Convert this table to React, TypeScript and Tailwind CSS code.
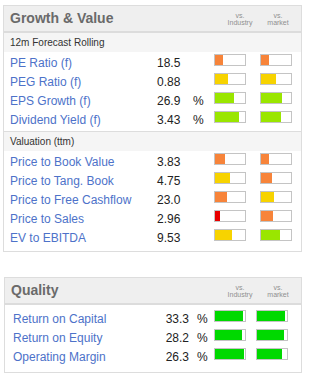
const growth = [
  { label: 'PE Ratio (f)', value: '18.5', pct: false, ind: [8, 'orange'], mkt: [8, 'orange'] },
  { label: 'PEG Ratio (f)', value: '0.88', pct: false, ind: [13, 'yellow'], mkt: [15, 'yellow'] },
  { label: 'EPS Growth (f)', value: '26.9', pct: true, ind: [19, 'lime'], mkt: [21, 'lime'] },
  { label: 'Dividend Yield (f)', value: '3.43', pct: true, ind: [24, 'lime'], mkt: [20, 'lime'] },
] as const

const valuation = [
  { label: 'Price to Book Value', value: '3.83', ind: [10, 'orange'], mkt: [8, 'orange'] },
  { label: 'Price to Tang. Book', value: '4.75', ind: [15, 'yellow'], mkt: [11, 'orange'] },
  { label: 'Price to Free Cashflow', value: '23.0', ind: [12, 'orange'], mkt: [13, 'yellow'] },
  { label: 'Price to Sales', value: '2.96', ind: [5, 'red'], mkt: [12, 'orange'] },
  { label: 'EV to EBITDA', value: '9.53', ind: [17, 'yellow'], mkt: [19, 'lime'] },
] as const

const quality = [
  { label: 'Return on Capital', value: '33.3', ind: 28, mkt: 28 },
  { label: 'Return on Equity', value: '28.2', ind: 27, mkt: 27 },
  { label: 'Operating Margin', value: '26.3', ind: 29, mkt: 25 },
]

const fills: Record<string, string> = {
  orange: 'bg-[#f7843a]',
  yellow: 'bg-[#f7d300]',
  lime: 'bg-[#9ae600]',
  red: 'bg-[#e80000]',
  green: 'bg-[#00d900]',
}

function Bar({ width, color }: { width: number; color: string }) {
  return (
    <div className="w-[32px] h-[12px] mb-[6px] border border-[#c4c4c4] bg-white flex shrink-0">
      <div className={`h-full ${fills[color]}`} style={{ width }} />
    </div>
  )
}

function Header({ title }: { title: string }) {
  return (
    <div className="h-[25px] bg-[#efefef] border-b-2 border-[#dcdcdc] box-content flex items-center justify-between pl-[6px] pr-[8px]">
      <span className="text-[14px] font-bold text-[#6a6a6a]">{title}</span>
      <div className="flex gap-[8px] text-[7px] leading-[7px] text-[#8f8f8f] text-center mt-[1px]">
        <div className="w-[30px]">vs.<br />Industry</div>
        <div className="w-[30px]">vs.<br />market</div>
      </div>
    </div>
  )
}

function SubHeader({ text }: { text: string }) {
  return (
    <div className="h-[19px] bg-[#f5f5f5] flex items-center pl-[6px] text-[10px] text-[#333]">{text}</div>
  )
}

export default function App() {
  return (
    <div className="w-[311px] h-[381px] bg-white pt-[5px] text-[12px] text-[#222]" style={{ fontFamily: '"Liberation Sans", Arial, sans-serif' }}>
      {/* Growth & Value */}
      <div className="ml-[3px] w-[299px] border border-[#dddddd]">
        <Header title="Growth & Value" />
        <SubHeader text="12m Forecast Rolling" />
        <div className="pt-[1px] pb-[2px]">
          {growth.map((r) => (
            <div key={r.label} className="h-[19px] flex items-center">
              <div className="w-[153px] pl-[6px] text-[#4d72c9]">{r.label}</div>
              <div className="w-[36px]">{r.value}</div>
              <div className="w-[21px]">{r.pct ? '%' : ''}</div>
              <Bar width={r.ind[0]} color={r.ind[1]} />
              <div className="w-[14px]" />
              <Bar width={r.mkt[0]} color={r.mkt[1]} />
            </div>
          ))}
        </div>
        <div className="border-t border-[#dddddd]">
          <SubHeader text="Valuation (ttm)" />
          <div className="pt-[1px] pb-[4px]">
            {valuation.map((r) => (
              <div key={r.label} className="h-[19px] flex items-center">
                <div className="w-[153px] pl-[6px] text-[#4d72c9]">{r.label}</div>
                <div className="w-[57px]">{r.value}</div>
                <Bar width={r.ind[0]} color={r.ind[1]} />
                <div className="w-[14px]" />
                <Bar width={r.mkt[0]} color={r.mkt[1]} />
              </div>
            ))}
          </div>
        </div>
      </div>

      {/* Quality */}
      <div className="ml-[4px] mt-[25px] w-[298px] border border-[#dddddd]">
        <Header title="Quality" />
        <div className="pt-[4px] pb-[6px]">
          {quality.map((r) => (
            <div key={r.label} className="h-[19px] flex items-center">
              <div className="w-[150px] pl-[8px] text-[#4d72c9]">{r.label}</div>
              <div className="w-[34px] text-right">{r.value}</div>
              <div className="w-[25px] pl-[8px]">%</div>
              <Bar width={r.ind} color="green" />
              <div className="w-[10px]" />
              <Bar width={r.mkt} color="green" />
            </div>
          ))}
        </div>
      </div>
    </div>
  )
}
